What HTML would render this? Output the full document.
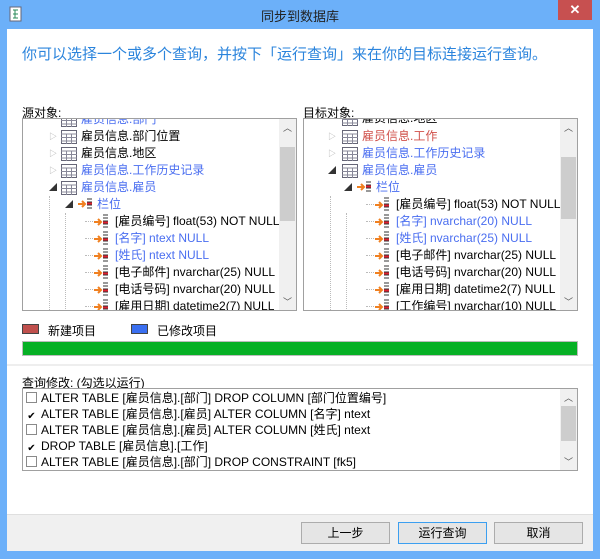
<!DOCTYPE html>
<html><head><meta charset="utf-8"><style>
*{margin:0;padding:0;box-sizing:border-box}
body{width:600px;height:559px;background:#6cb0f9;font-family:"Liberation Sans","Noto Sans CJK SC",sans-serif;font-size:12px;color:#000;position:relative;overflow:hidden}
.a{position:absolute;white-space:nowrap}
.client{position:absolute;left:7px;top:29px;width:586px;height:522px;background:#fff}
.bottom{position:absolute;left:7px;top:514px;width:586px;height:37px;background:#f0f0f0;border-top:1px solid #dfdfdf}
.box{position:absolute;border:1px solid #a0a0a0;background:#fff;overflow:hidden}
.sb{position:absolute;right:0;top:0;width:17px;height:100%;background:#f0f0f0}
.thumb{position:absolute;left:1px;width:15px;background:#cdcdcd}
.r{position:absolute;white-space:nowrap;height:17px;line-height:17px}
.b{color:#4a6ef0}.red{color:#d0504a}
.exp{position:absolute;font-size:8px;color:#aaa}
.btn{position:absolute;top:522px;width:89px;height:22px;background:#e5e5e5;border:1px solid #acacac;text-align:center;line-height:20px}
.cb{display:inline-block;width:11px;height:11px;border:1px solid #8a8a8a;vertical-align:-1px;margin-right:4px;font-size:10px;line-height:9px;text-align:center}
.dv{position:absolute;border-left:1px dotted #bbb}
</style></head><body>
<svg class="a" style="left:9px;top:6px" width="14" height="16"><rect x="1" y="1" width="11" height="14" fill="#fff" stroke="#667"/><path d="M4 4h5M4 8h5M4 12h5M6 4v8" stroke="#2a8a5a"/></svg>
<div class="a" style="left:0;width:600px;top:6px;text-align:center;font-size:13px;color:#222">同步到数据库</div>
<div class="a" style="left:558px;top:0;width:34px;height:20px;background:#c75050;color:#fff;text-align:center;line-height:20px;font-size:13px;font-weight:bold">✕</div>
<div class="client"></div>
<div class="a" style="left:22px;top:43px;font-size:15px;color:#2b84dc">你可以选择一个或多个查询，并按下「运行查询」来在你的目标连接运行查询。</div>

<div class="a" style="left:22px;top:104px">源对象:</div>
<div class="a" style="left:303px;top:104px">目标对象:</div>

<div class="box" style="left:22px;top:118px;width:275px;height:193px">
 <div class="dv" style="left:26px;top:77px;height:120px"></div>
 <div class="dv" style="left:42px;top:94px;height:100px"></div>
 <svg class="a" style="left:38px;top:-6px" width="16" height="14"><rect x=".5" y=".5" width="15" height="13" fill="#fff" stroke="#667"/><path d="M0 4h16M0 7.5h16M0 11h16M5.5 4v10M10.5 4v10" stroke="#889"/></svg><div class="r b" style="left:58px;top:-8px">雇员信息.部门</div>
 <div class="exp" style="left:26px;top:12px">▷</div><svg class="a" style="left:38px;top:11px" width="16" height="14"><rect x=".5" y=".5" width="15" height="13" fill="#fff" stroke="#667"/><path d="M0 4h16M0 7.5h16M0 11h16M5.5 4v10M10.5 4v10" stroke="#889"/></svg><div class="r" style="left:58px;top:9px">雇员信息.部门位置</div>
 <div class="exp" style="left:26px;top:29px">▷</div><svg class="a" style="left:38px;top:28px" width="16" height="14"><rect x=".5" y=".5" width="15" height="13" fill="#fff" stroke="#667"/><path d="M0 4h16M0 7.5h16M0 11h16M5.5 4v10M10.5 4v10" stroke="#889"/></svg><div class="r" style="left:58px;top:26px">雇员信息.地区</div>
 <div class="exp" style="left:26px;top:46px">▷</div><svg class="a" style="left:38px;top:45px" width="16" height="14"><rect x=".5" y=".5" width="15" height="13" fill="#fff" stroke="#667"/><path d="M0 4h16M0 7.5h16M0 11h16M5.5 4v10M10.5 4v10" stroke="#889"/></svg><div class="r b" style="left:58px;top:43px">雇员信息.工作历史记录</div>
 <div class="exp" style="left:26px;top:63px;color:#333">◢</div><svg class="a" style="left:38px;top:62px" width="16" height="14"><rect x=".5" y=".5" width="15" height="13" fill="#fff" stroke="#667"/><path d="M0 4h16M0 7.5h16M0 11h16M5.5 4v10M10.5 4v10" stroke="#889"/></svg><div class="r b" style="left:58px;top:60px">雇员信息.雇员</div>
 <div class="exp" style="left:42px;top:80px;color:#333">◢</div><svg class="a" style="left:54px;top:78px" width="16" height="14"><path d="M1 7h7M5 4l3 3-3 3" stroke="#f08020" stroke-width="2" fill="none"/><path d="M10 2h5M10 5h5M10 8h5M10 11h5" stroke="#333"/><path d="M10 6.5h5" stroke="#e02030" stroke-width="2"/></svg><div class="r b" style="left:74px;top:77px">栏位</div>
 <div class="sb"><div class="a" style="left:4px;top:2px;font-size:9px;color:#555">︿</div><div class="thumb" style="top:28px;height:74px"></div><div class="a" style="left:4px;top:176px;font-size:9px;color:#555">﹀</div></div>
</div>

<div class="box" style="left:303px;top:118px;width:275px;height:193px">
 <div class="dv" style="left:26px;top:77px;height:120px"></div>
 <div class="dv" style="left:42px;top:94px;height:100px"></div>
 <svg class="a" style="left:38px;top:-7px" width="16" height="14"><rect x=".5" y=".5" width="15" height="13" fill="#fff" stroke="#667"/><path d="M0 4h16M0 7.5h16M0 11h16M5.5 4v10M10.5 4v10" stroke="#889"/></svg><div class="r" style="left:58px;top:-9px">雇员信息.地区</div>
 <div class="exp" style="left:24px;top:12px">▷</div><svg class="a" style="left:38px;top:11px" width="16" height="14"><rect x=".5" y=".5" width="15" height="13" fill="#fff" stroke="#667"/><path d="M0 4h16M0 7.5h16M0 11h16M5.5 4v10M10.5 4v10" stroke="#889"/></svg><div class="r red" style="left:58px;top:9px">雇员信息.工作</div>
 <div class="exp" style="left:24px;top:29px">▷</div><svg class="a" style="left:38px;top:28px" width="16" height="14"><rect x=".5" y=".5" width="15" height="13" fill="#fff" stroke="#667"/><path d="M0 4h16M0 7.5h16M0 11h16M5.5 4v10M10.5 4v10" stroke="#889"/></svg><div class="r b" style="left:58px;top:26px">雇员信息.工作历史记录</div>
 <div class="exp" style="left:24px;top:46px;color:#333">◢</div><svg class="a" style="left:38px;top:45px" width="16" height="14"><rect x=".5" y=".5" width="15" height="13" fill="#fff" stroke="#667"/><path d="M0 4h16M0 7.5h16M0 11h16M5.5 4v10M10.5 4v10" stroke="#889"/></svg><div class="r b" style="left:58px;top:43px">雇员信息.雇员</div>
 <div class="exp" style="left:40px;top:63px;color:#333">◢</div><svg class="a" style="left:52px;top:61px" width="16" height="14"><path d="M1 7h7M5 4l3 3-3 3" stroke="#f08020" stroke-width="2" fill="none"/><path d="M10 2h5M10 5h5M10 8h5M10 11h5" stroke="#333"/><path d="M10 6.5h5" stroke="#e02030" stroke-width="2"/></svg><div class="r b" style="left:72px;top:60px">栏位</div>
 <div class="sb"><div class="a" style="left:4px;top:2px;font-size:9px;color:#555">︿</div><div class="thumb" style="top:38px;height:62px"></div><div class="a" style="left:4px;top:176px;font-size:9px;color:#555">﹀</div></div>
</div>

<script>
function rows(boxIdx,items,top,left){
 var box=document.querySelectorAll('.box')[boxIdx];
 items.forEach(function(it,i){
  var y=top+i*17;
  box.insertAdjacentHTML('beforeend','<div class="a" style="left:'+(left-30)+'px;top:'+(y+8)+'px;width:8px;border-top:1px dotted #bbb"></div><svg class="a" style="left:'+(left-22)+'px;top:'+(y+1)+'px" width="16" height="16"><path d="M1 8h7M5 5l3 3-3 3" stroke="#f08020" stroke-width="2" fill="none"/><path d="M10 1h5M10 4h5M10 7h5M10 10h5M10 13h5" stroke="#333"/><path d="M10 8.5h5" stroke="#e02030" stroke-width="2"/></svg><div class="r'+(it[1]?' b':'')+'" style="left:'+left+'px;top:'+y+'px">'+it[0]+'</div>');
 });
}
rows(0,[["[雇员编号] float(53) NOT NULL"],["[名字] ntext NULL",1],["[姓氏] ntext NULL",1],["[电子邮件] nvarchar(25) NULL"],["[电话号码] nvarchar(20) NULL"],["[雇用日期] datetime2(7) NULL"]],94,92);
rows(1,[["[雇员编号] float(53) NOT NULL"],["[名字] nvarchar(20) NULL",1],["[姓氏] nvarchar(25) NULL",1],["[电子邮件] nvarchar(25) NULL"],["[电话号码] nvarchar(20) NULL"],["[雇用日期] datetime2(7) NULL"],["[工作编号] nvarchar(10) NULL"]],77,92);
</script>

<div class="a" style="left:22px;top:324px;width:17px;height:10px;background:#c0504d;border:1px solid #444"></div>
<div class="a" style="left:48px;top:322px">新建项目</div>
<div class="a" style="left:131px;top:324px;width:17px;height:10px;background:#3a6ff0;border:1px solid #444"></div>
<div class="a" style="left:157px;top:322px">已修改项目</div>
<div class="a" style="left:22px;top:341px;width:556px;height:15px;background:#06b025;border:1px solid #bcbcbc"></div>
<div class="a" style="left:7px;top:364px;width:586px;height:2px;background:#eee"></div>
<div class="a" style="left:22px;top:374px">查询修改: (勾选以运行)</div>
<div class="box" style="left:22px;top:388px;width:556px;height:83px">
 <div class="r" style="left:3px;top:1px;height:16px;line-height:16px"><span class="cb"></span>ALTER TABLE [雇员信息].[部门] DROP COLUMN [部门位置编号]</div>
 <div class="r" style="left:3px;top:17px;height:16px;line-height:16px"><span class="cb" style="border:none">✔</span>ALTER TABLE [雇员信息].[雇员] ALTER COLUMN [名字] ntext</div>
 <div class="r" style="left:3px;top:33px;height:16px;line-height:16px"><span class="cb"></span>ALTER TABLE [雇员信息].[雇员] ALTER COLUMN [姓氏] ntext</div>
 <div class="r" style="left:3px;top:49px;height:16px;line-height:16px"><span class="cb" style="border:none">✔</span>DROP TABLE [雇员信息].[工作]</div>
 <div class="r" style="left:3px;top:65px;height:16px;line-height:16px"><span class="cb"></span>ALTER TABLE [雇员信息].[部门] DROP CONSTRAINT [fk5]</div>
 <div class="sb"><div class="a" style="left:4px;top:2px;font-size:9px;color:#555">︿</div><div class="thumb" style="top:17px;height:35px"></div><div class="a" style="left:4px;top:66px;font-size:9px;color:#555">﹀</div></div>
</div>
<div class="bottom"></div>
<div class="btn" style="left:301px">上一步</div>
<div class="btn" style="left:398px;border-color:#3c9ff0">运行查询</div>
<div class="btn" style="left:494px">取消</div>
</body></html>
